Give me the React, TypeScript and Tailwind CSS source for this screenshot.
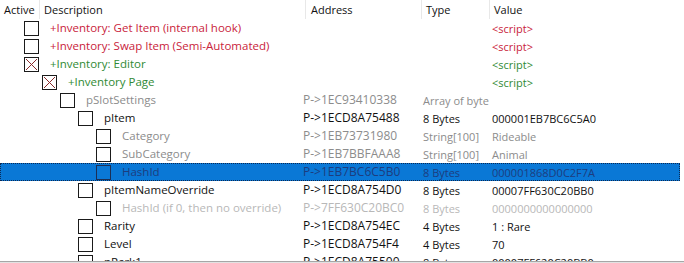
type Tone = 'red' | 'green' | 'gray' | 'faint' | 'black';

interface Entry {
  desc: string;
  level: number;
  tone: Tone;
  address?: string;
  type?: string;
  value?: string;
  checked?: boolean;
  selected?: boolean;
}

const ROWS: Entry[] = [
  { desc: '+Inventory: Get Item (internal hook)', level: 0, tone: 'red', value: '<script>' },
  { desc: '+Inventory: Swap Item (Semi-Automated)', level: 0, tone: 'red', value: '<script>' },
  { desc: '+Inventory: Editor', level: 0, tone: 'green', value: '<script>', checked: true },
  { desc: '+Inventory Page', level: 1, tone: 'green', value: '<script>', checked: true },
  { desc: 'pSlotSettings', level: 2, tone: 'gray', address: 'P->1EC93410338', type: 'Array of byte' },
  { desc: 'pItem', level: 3, tone: 'black', address: 'P->1ECD8A75488', type: '8 Bytes', value: '000001EB7BC6C5A0' },
  { desc: 'Category', level: 4, tone: 'gray', address: 'P->1EB73731980', type: 'String[100]', value: 'Rideable' },
  { desc: 'SubCategory', level: 4, tone: 'gray', address: 'P->1EB7BBFAAA8', type: 'String[100]', value: 'Animal' },
  { desc: 'HashId', level: 4, tone: 'gray', address: 'P->1EB7BC6C5B0', type: '8 Bytes', value: '000001868D0C2F7A', selected: true },
  { desc: 'pItemNameOverride', level: 3, tone: 'black', address: 'P->1ECD8A754D0', type: '8 Bytes', value: '00007FF630C20BB0' },
  { desc: 'HashId (if 0, then no override)', level: 4, tone: 'faint', address: 'P->7FF630C20BC0', type: '8 Bytes', value: '0000000000000000' },
  { desc: 'Rarity', level: 3, tone: 'black', address: 'P->1ECD8A754EC', type: '4 Bytes', value: '1 : Rare' },
  { desc: 'Level', level: 3, tone: 'black', address: 'P->1ECD8A754F4', type: '4 Bytes', value: '70' },
  { desc: 'pPerk1', level: 3, tone: 'black', address: 'P->1ECD8A75500', type: '8 Bytes', value: '00007FF620C20BB0' },
];

const TONE_CLASS: Record<Tone, string> = {
  red: 'text-[#c9233b]',
  green: 'text-[#2f8a34]',
  gray: 'text-[#8c8c8c]',
  faint: 'text-[#b8b8b8]',
  black: 'text-[#111]',
};

const INDENT = ['pl-[24px]', 'pl-[42px]', 'pl-[60px]', 'pl-[78px]', 'pl-[96px]'];

function CheckBox({ checked, selected }: { checked?: boolean; selected?: boolean }) {
  return (
    <svg width="15" height="15" viewBox="0 0 15 15" className="shrink-0">
      <rect
        x="0.5"
        y="0.5"
        width="14"
        height="14"
        fill={selected ? 'none' : '#fff'}
        stroke={selected ? '#1c2f55' : '#1a1a1a'}
      />
      {checked && (
        <path d="M2 2 L13 13 M13 2 L2 13" stroke="#8a2a2a" strokeWidth="1" />
      )}
    </svg>
  );
}

export default function App() {
  return (
    <div className="w-[684px] h-[263px] bg-white overflow-hidden font-['Open_Sans',sans-serif] text-[11px] leading-none select-none">
      {/* Header */}
      <div className="flex h-[19px] items-center text-[#111]">
        <div className="w-[40px] h-full flex items-center pl-[4px] border-r border-[#e8e8e8]">Active</div>
        <div className="w-[266px] h-full flex items-center pl-[4px] border-r border-[#e8e8e8]">Description</div>
        <div className="w-[116px] h-full flex items-center pl-[5px] border-r border-[#e8e8e8]">Address</div>
        <div className="w-[68px] h-full flex items-center pl-[4px] border-r border-[#e8e8e8]">Type</div>
        <div className="flex-1 h-full flex items-center pl-[4px]">Value</div>
      </div>

      {/* Rows */}
      <div className="h-[242px] overflow-hidden">
        {ROWS.map((row, i) => {
          const tone = row.selected ? 'text-[#1d3d7e]' : TONE_CLASS[row.tone];
          return (
            <div
              key={i}
              className={`flex h-[18px] items-center whitespace-nowrap ${tone} ${
                row.selected ? 'w-[680px] bg-[#0a78d6] outline outline-1 outline-dotted outline-[#0b2a55] -outline-offset-1' : ''
              }`}
            >
              <div className={`w-[303px] flex items-center ${INDENT[row.level]}`}>
                <CheckBox checked={row.checked} selected={row.selected} />
                <span className="ml-[11px] text-[11.5px]">{row.desc}</span>
              </div>
              <div className="w-[120px] text-[12px]">{row.address}</div>
              <div className="w-[69px]">{row.type}</div>
              <div className="flex-1">{row.value}</div>
            </div>
          );
        })}
      </div>
      <div className="h-px bg-[#a6a6a6]" />
      <div className="h-px bg-[#e2e2e2]" />
    </div>
  );
}
